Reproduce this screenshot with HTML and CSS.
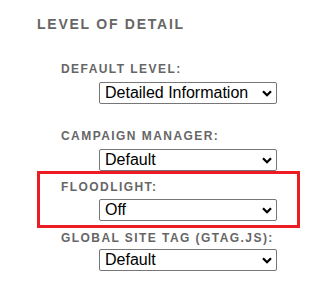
FILE: index.html
```html
<!DOCTYPE html>
<html lang="en">
<head>
<meta charset="utf-8">
<title>Level of detail</title>
<link rel="stylesheet" href="styles.css">
</head>
<body>
<section class="level">
  <h2 class="level-title">LEVEL OF DETAIL</h2>

  <div class="field field-first">
    <label class="field-label" for="lvl-default">DEFAULT LEVEL:</label>
    <div class="select-wrap">
      <select id="lvl-default" class="select">
        <option>Detailed Information</option>
      </select>
      <svg class="chev" width="10" height="7" viewBox="0 0 10 7" aria-hidden="true"><path d="M1 1.2 L5 5.2 L9 1.2" fill="none" stroke="#000" stroke-width="2.3"/></svg>
    </div>
  </div>

  <div class="field field-spaced">
    <label class="field-label" for="lvl-cm">CAMPAIGN MANAGER:</label>
    <div class="select-wrap">
      <select id="lvl-cm" class="select">
        <option>Default</option>
      </select>
      <svg class="chev" width="10" height="7" viewBox="0 0 10 7" aria-hidden="true"><path d="M1 1.2 L5 5.2 L9 1.2" fill="none" stroke="#000" stroke-width="2.3"/></svg>
    </div>
  </div>

  <div class="field field-highlight">
    <label class="field-label" for="lvl-fl">FLOODLIGHT:</label>
    <div class="select-wrap">
      <select id="lvl-fl" class="select">
        <option>Off</option>
      </select>
      <svg class="chev" width="10" height="7" viewBox="0 0 10 7" aria-hidden="true"><path d="M1 1.2 L5 5.2 L9 1.2" fill="none" stroke="#000" stroke-width="2.3"/></svg>
    </div>
  </div>

  <div class="field field-tight">
    <label class="field-label" for="lvl-gtag">GLOBAL SITE TAG (GTAG.JS):</label>
    <div class="select-wrap">
      <select id="lvl-gtag" class="select">
        <option>Default</option>
      </select>
      <svg class="chev" width="10" height="7" viewBox="0 0 10 7" aria-hidden="true"><path d="M1 1.2 L5 5.2 L9 1.2" fill="none" stroke="#000" stroke-width="2.3"/></svg>
    </div>
  </div>
</section>
</body>
</html>
```

FILE: styles.css
```css
html, body {
  margin: 0;
  padding: 0;
  background: #fff;
}

body {
  font-family: "Liberation Sans", Arial, sans-serif;
  width: 319px;
  height: 284px;
  overflow: hidden;
}

.level {
  display: flex;
  flex-direction: column;
  padding: 16px 0 0 37px;
}

.level-title {
  margin: 0;
  font-size: 14px;
  line-height: 16px;
  font-weight: bold;
  letter-spacing: 0.125em;
  color: #666;
}

.field {
  display: flex;
  flex-direction: column;
  align-items: flex-start;
  gap: 6px;
  padding-left: 24px;
}

.field-first {
  margin-top: 30px;
}

.field-spaced {
  margin-top: 25px;
}

.field-highlight {
  width: 263px;
  box-sizing: border-box;
  border: 3px solid #ed1c24;
  padding: 6px 0 4px 21px;
  gap: 5px;
}

.field-tight {
  margin-top: 3px;
  gap: 4px;
}

.field-label {
  display: block;
  font-size: 12px;
  line-height: 14px;
  font-weight: bold;
  letter-spacing: 0.12em;
  color: #666;
}

.select-wrap {
  position: relative;
  margin-left: 38px;
  width: 178px;
  height: 22px;
}

.select {
  -webkit-appearance: none;
  appearance: none;
  box-sizing: border-box;
  width: 178px;
  height: 22px;
  margin: 0;
  padding: 0 0 0 5px;
  border: 1px solid #767676;
  border-radius: 2px;
  background: #fff;
  color: #000;
  font-family: "Liberation Sans", Arial, sans-serif;
  font-size: 16px;
  line-height: 20px;
}

.chev {
  position: absolute;
  right: 5px;
  top: 8px;
  pointer-events: none;
}
```
